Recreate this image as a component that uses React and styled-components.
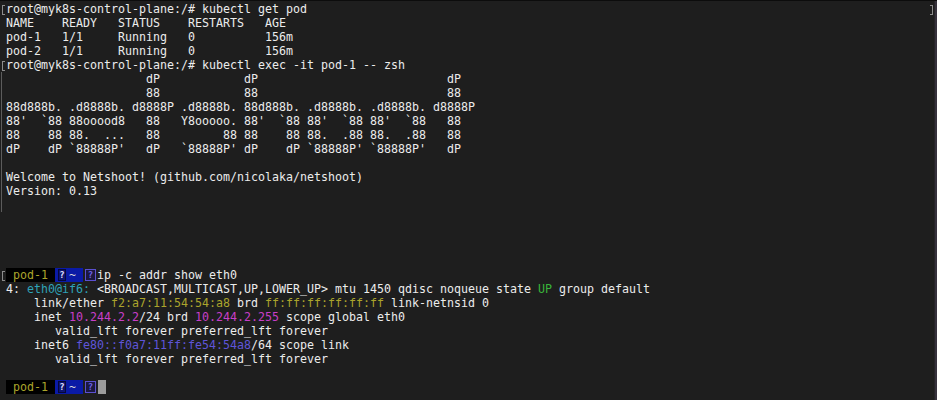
import React from "react";
import styled, { createGlobalStyle } from "styled-components";

const GlobalStyle = createGlobalStyle`
  html, body {
    margin: 0;
    padding: 0;
    background: #1e1e1e;
  }
`;

const tones = {
  text: "#ececec",
  yellow: "#aba42c",
  cyan: "#2ea2b8",
  magenta: "#c83fc8",
  violet: "#5f55d9",
  green: "#3ab53a",
};

const Window = styled.div`
  display: grid;
  grid-template-columns: 1fr 3px;
  width: 937px;
  height: 400px;
  box-sizing: border-box;
  border-top: 1px solid #0c0c0c;
  background: #1e1e1e;
  overflow: hidden;
`;

const Screen = styled.div`
  display: flex;
  flex-direction: column;
  padding-top: 1px;
  font-family: "DejaVu Sans Mono", "Liberation Mono", monospace;
  font-size: 11.63px;
  color: ${tones.text};
`;

const Scrollbar = styled.div`
  background: #36323c;
  border-left: 1px solid #262428;
`;

const Row = styled.div`
  display: flex;
  height: 14px;
  line-height: 14px;
`;

const Gutter = styled.div`
  flex: none;
  width: 6px;
  display: flex;
  justify-content: flex-start;
  box-sizing: border-box;
  ${({ $span }) => $span && `border-left: 1px solid #5c5c5c; margin-left: 1px; width: 5px;`}
`;

const Mark = styled.span`
  display: block;
  width: 3px;
  height: 10px;
  margin-top: 3px;
  margin-left: 2px;
  box-sizing: border-box;
  border: 1px solid #8c8c8c;
  border-right: none;
`;

const EndMark = styled(Mark)`
  margin-left: 0;
  border: 1px solid #8c8c8c;
  border-left: none;
`;

const Text = styled.div`
  flex: 1;
  min-width: 0;
  white-space: pre;
`;

const RightGutter = styled.div`
  flex: none;
  width: 4px;
`;

const Hl = styled.span`
  color: ${({ $tone }) => tones[$tone]};
`;

const Seg = styled.span`
  display: inline-block;
  height: 14px;
  vertical-align: top;
  background: ${({ $bg }) => $bg};
  color: ${({ $fg }) => $fg};
`;

const Missing = styled.span`
  display: inline-block;
  box-sizing: border-box;
  vertical-align: top;
  margin-top: 1px;
  height: 12px;
  width: ${({ $w }) => $w}px;
  margin-left: ${({ $ml }) => $ml}px;
  margin-right: ${({ $mr }) => $mr}px;
  font-size: 9px;
  line-height: 10px;
  text-align: center;
  font-weight: bold;
  border: 1px solid ${({ $border }) => $border};
  background: ${({ $fill }) => $fill};
  color: ${({ $fg }) => $fg};
`;

const Cursor = styled.span`
  display: inline-block;
  vertical-align: top;
  width: 8px;
  height: 14px;
  margin-left: 1px;
  background: #9c9c9c;
`;

function Prompt() {
  return (
    <>
      <Seg $bg="#000" $fg={tones.yellow}> pod-1 </Seg>
      <Seg $bg="#0a1aa6" $fg="#d8d8d8">
        <Missing $w={8} $ml={3} $mr={3} $border="#05083a" $fill="#0e1470" $fg="#e0e0ff">?</Missing>~ </Seg>
      <Missing $w={11} $ml={2} $mr={1} $border="#5b50d0" $fill="#1b1840" $fg="#6d62e6">?</Missing>
    </>
  );
}

function Line({ mark, span, end, children }) {
  return (
    <Row>
      <Gutter $span={span}>{mark && <Mark />}</Gutter>
      <Text>{children}</Text>
      <RightGutter>{end && <EndMark />}</RightGutter>
    </Row>
  );
}

const logo = [
  "                    dP            dP                           dP",
  "                    88            88                           88",
  "88d888b. .d8888b. d8888P .d8888b. 88d888b. .d8888b. .d8888b. d8888P",
  "88'  `88 88ooood8   88   Y8ooooo. 88'  `88 88'  `88 88'  `88   88",
  "88    88 88.  ...   88         88 88    88 88.  .88 88.  .88   88",
  "dP    dP `88888P'   dP   `88888P' dP    dP `88888P' `88888P'   dP",
];

export default function App() {
  return (
    <>
      <GlobalStyle />
      <Window>
        <Screen>
          <Line mark end>root@myk8s-control-plane:/# kubectl get pod</Line>
          <Line>NAME    READY   STATUS    RESTARTS   AGE</Line>
          <Line>pod-1   1/1     Running   0          156m</Line>
          <Line>pod-2   1/1     Running   0          156m</Line>
          <Line mark>root@myk8s-control-plane:/# kubectl exec -it pod-1 -- zsh</Line>
          {logo.map((l, i) => (
            <Line span key={i}>{l}</Line>
          ))}
          <Line span> </Line>
          <Line span>Welcome to Netshoot! (github.com/nicolaka/netshoot)</Line>
          <Line span>Version: 0.13</Line>
          <Line span> </Line>
          <Line> </Line>
          <Line> </Line>
          <Line> </Line>
          <Line> </Line>
          <Line mark><Prompt />ip -c addr show eth0</Line>
          <Line>
            4: <Hl $tone="cyan">eth0@if6:</Hl> {"<BROADCAST,MULTICAST,UP,LOWER_UP> mtu 1450 qdisc noqueue state "}
            <Hl $tone="green">UP</Hl> group default
          </Line>
          <Line>
            {"    link/ether "}<Hl $tone="yellow">f2:a7:11:54:54:a8</Hl> brd <Hl $tone="yellow">ff:ff:ff:ff:ff:ff</Hl> link-netnsid 0
          </Line>
          <Line>
            {"    inet "}<Hl $tone="magenta">10.244.2.2</Hl>/24 brd <Hl $tone="magenta">10.244.2.255</Hl> scope global eth0
          </Line>
          <Line>{"       valid_lft forever preferred_lft forever"}</Line>
          <Line>
            {"    inet6 "}<Hl $tone="violet">fe80::f0a7:11ff:fe54:54a8</Hl>/64 scope link
          </Line>
          <Line>{"       valid_lft forever preferred_lft forever"}</Line>
          <Line> </Line>
          <Line><Prompt /><Cursor /></Line>
        </Screen>
        <Scrollbar />
      </Window>
    </>
  );
}
